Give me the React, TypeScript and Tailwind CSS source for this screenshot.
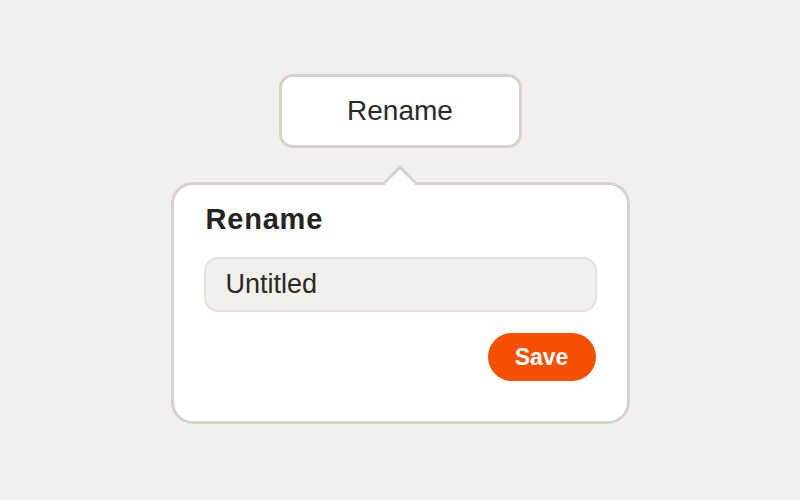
import React from "react";

export default function App() {
  return (
    <div
      className="w-[800px] h-[500px] bg-[#f1f0ec] flex flex-col items-center pt-[74px]"
      style={{ fontFamily: '"Liberation Sans", Arial, sans-serif' }}
    >
      <button className="w-[243px] h-[74px] bg-white border-[3px] border-[#d5d2c9] rounded-[14px] text-[28px] text-[#2a2a25] flex items-center justify-center">
        Rename
      </button>
      <div className="relative mt-[34px] w-[459px] h-[242px] bg-white border-[3px] border-[#d5d2c9] rounded-[22px] px-[30px] pt-[18px] flex flex-col">
        <div className="absolute left-1/2 -top-[15px] -ml-[12px] w-[24px] h-[24px] rotate-45 bg-white border-l-[3px] border-t-[3px] border-[#d5d2c9]" />
        <h2 className="text-[29px] leading-[32px] font-bold tracking-[0.8px] text-[#24241f] pl-[2px] relative">Rename</h2>
        <div className="mt-[22px] h-[55px] bg-[#f1f0ec] border-2 border-[#e3e1da] rounded-[14px] flex items-center px-[20px] text-[27px] text-[#2a2a25] relative">
          Untitled
        </div>
        <div className="mt-[21px] flex justify-end relative">
          <button className="w-[108px] h-[48px] rounded-full bg-[#f45000] text-white text-[23px] font-bold mr-[1px]">
            Save
          </button>
        </div>
      </div>
    </div>
  );
}
